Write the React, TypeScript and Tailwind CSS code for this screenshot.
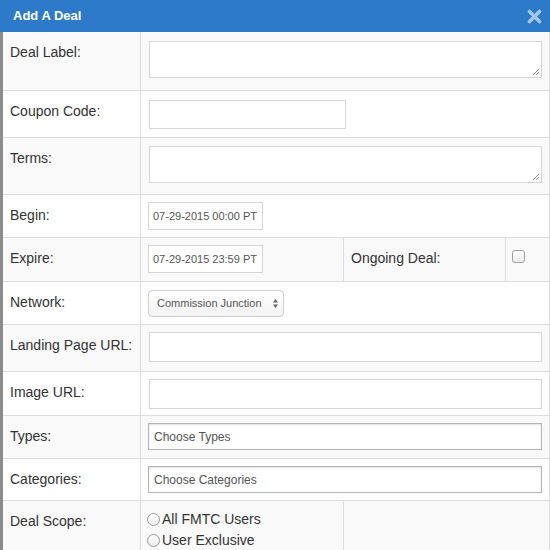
import React from "react";

const font = { fontFamily: '"Liberation Sans", Arial, sans-serif' };

function Label({ children }: { children: React.ReactNode }) {
  return (
    <div className="w-[138px] shrink-0 border-r border-[#dddddd] pl-[7px] pt-[10px] text-[14px] leading-5 text-[#333]">
      {children}
    </div>
  );
}

function TextBox({ w, h }: { w: string; h: string }) {
  return <div className={`${w} ${h} border border-[#d6d6d6] bg-white`} />;
}

function DateBox({ value }: { value: string }) {
  return (
    <div className="flex h-[28px] w-[115px] items-center border border-[#d6d6d6] bg-white pl-[4px] text-[11px] text-[#555]">
      {value}
    </div>
  );
}

function ChooseBox({ text }: { text: string }) {
  return (
    <div className="flex h-[27px] w-[394px] items-center border border-[#b5b5b5] bg-white pl-[5px] text-[12px] text-[#555] shadow-[inset_0_1px_2px_rgba(0,0,0,0.12)]">
      {text}
    </div>
  );
}

function Radio({ label }: { label: string }) {
  return (
    <div className="flex items-center gap-[2px] leading-[21px]">
      <span className="h-[13px] w-[13px] rounded-full border border-[#9a9a9a] bg-gradient-to-b from-white to-[#ececec]" />
      <span className="text-[14px] text-[#333]">{label}</span>
    </div>
  );
}

export default function App() {
  return (
    <div style={font} className="h-[550px] w-[550px] overflow-hidden bg-white">
      {/* header */}
      <div className="flex h-[32px] items-center justify-between bg-[#2d7bc8] pl-[13px] pr-[8px]">
        <span className="text-[13px] font-bold text-white">Add A Deal</span>
        <svg width="15" height="15" viewBox="0 0 15 15">
          <path d="M2.5 2.5 L12.5 12.5 M12.5 2.5 L2.5 12.5" stroke="#a3c6ec" strokeWidth="3.6" strokeLinecap="round" />
        </svg>
      </div>

      <div className="flex">
        <div className="w-[3px] shrink-0 bg-[#8c8c8c]" />
        <div className="flex-1 border-r border-[#dddddd]">
          {/* Deal Label */}
          <div className="flex h-[59px] border-b border-[#dddddd] bg-[#f9f9f9]">
            <Label>Deal Label:</Label>
            <div className="pl-[8px] pt-[9px]">
              <div className="relative h-[37px] w-[393px] border border-[#d6d6d6] bg-white">
                <svg className="absolute bottom-[1px] right-[1px]" width="8" height="8" viewBox="0 0 8 8">
                  <path d="M7 1 L1 7 M7 4 L4 7" stroke="#999" strokeWidth="1" />
                </svg>
              </div>
            </div>
          </div>

          {/* Coupon Code */}
          <div className="flex h-[47px] border-b border-[#dddddd] bg-white">
            <Label>Coupon Code:</Label>
            <div className="pl-[8px] pt-[9px]">
              <TextBox w="w-[197px]" h="h-[29px]" />
            </div>
          </div>

          {/* Terms */}
          <div className="flex h-[57px] border-b border-[#dddddd] bg-[#f9f9f9]">
            <Label>Terms:</Label>
            <div className="pl-[8px] pt-[8px]">
              <div className="relative h-[37px] w-[393px] border border-[#d6d6d6] bg-white">
                <svg className="absolute bottom-[1px] right-[1px]" width="8" height="8" viewBox="0 0 8 8">
                  <path d="M7 1 L1 7 M7 4 L4 7" stroke="#999" strokeWidth="1" />
                </svg>
              </div>
            </div>
          </div>

          {/* Begin */}
          <div className="flex h-[43px] border-b border-[#dddddd] bg-white">
            <Label>Begin:</Label>
            <div className="pl-[7px] pt-[7px]">
              <DateBox value="07-29-2015 00:00 PT" />
            </div>
          </div>

          {/* Expire */}
          <div className="flex h-[44px] border-b border-[#dddddd] bg-[#f9f9f9]">
            <Label>Expire:</Label>
            <div className="w-[203px] shrink-0 border-r border-[#dddddd] pl-[7px] pt-[7px]">
              <DateBox value="07-29-2015 23:59 PT" />
            </div>
            <div className="w-[162px] shrink-0 border-r border-[#dddddd] pl-[7px] pt-[10px] text-[14px] leading-5 text-[#333]">
              Ongoing Deal:
            </div>
            <div className="pl-[6px] pt-[12px]">
              <div className="h-[13px] w-[13px] rounded-[3px] border border-[#a0a0a0] bg-gradient-to-b from-white to-[#ededed]" />
            </div>
          </div>

          {/* Network */}
          <div className="flex h-[43px] border-b border-[#dddddd] bg-white">
            <Label>Network:</Label>
            <div className="pl-[7px] pt-[8px]">
              <div className="flex h-[27px] w-[136px] items-center justify-between rounded-[4px] border border-[#cfcfcf] bg-gradient-to-b from-white to-[#f3f3f3] pl-[8px] pr-[4px] text-[11px] text-[#555]">
                <span>Commission Junction</span>
                <svg width="7" height="11" viewBox="0 0 7 11">
                  <path d="M3.5 1 L6 4.5 L1 4.5 Z M3.5 10 L6 6.5 L1 6.5 Z" fill="#666" />
                </svg>
              </div>
            </div>
          </div>

          {/* Landing Page URL */}
          <div className="flex h-[47px] border-b border-[#dddddd] bg-[#f9f9f9]">
            <Label>Landing Page URL:</Label>
            <div className="pl-[8px] pt-[7px]">
              <TextBox w="w-[393px]" h="h-[30px]" />
            </div>
          </div>

          {/* Image URL */}
          <div className="flex h-[44px] border-b border-[#dddddd] bg-white">
            <Label>Image URL:</Label>
            <div className="pl-[8px] pt-[7px]">
              <TextBox w="w-[393px]" h="h-[30px]" />
            </div>
          </div>

          {/* Types */}
          <div className="flex h-[43px] border-b border-[#dddddd] bg-[#f9f9f9]">
            <Label>Types:</Label>
            <div className="pl-[7px] pt-[7px]">
              <ChooseBox text="Choose Types" />
            </div>
          </div>

          {/* Categories */}
          <div className="flex h-[42px] border-b border-[#dddddd] bg-white">
            <Label>Categories:</Label>
            <div className="pl-[7px] pt-[7px]">
              <ChooseBox text="Choose Categories" />
            </div>
          </div>

          {/* Deal Scope */}
          <div className="flex h-[60px] bg-[#f9f9f9]">
            <Label>Deal Scope:</Label>
            <div className="w-[203px] shrink-0 border-r border-[#dddddd] pl-[6px] pt-[8px]">
              <Radio label="All FMTC Users" />
              <Radio label="User Exclusive" />
            </div>
            <div className="flex-1" />
          </div>
        </div>
      </div>
    </div>
  );
}
